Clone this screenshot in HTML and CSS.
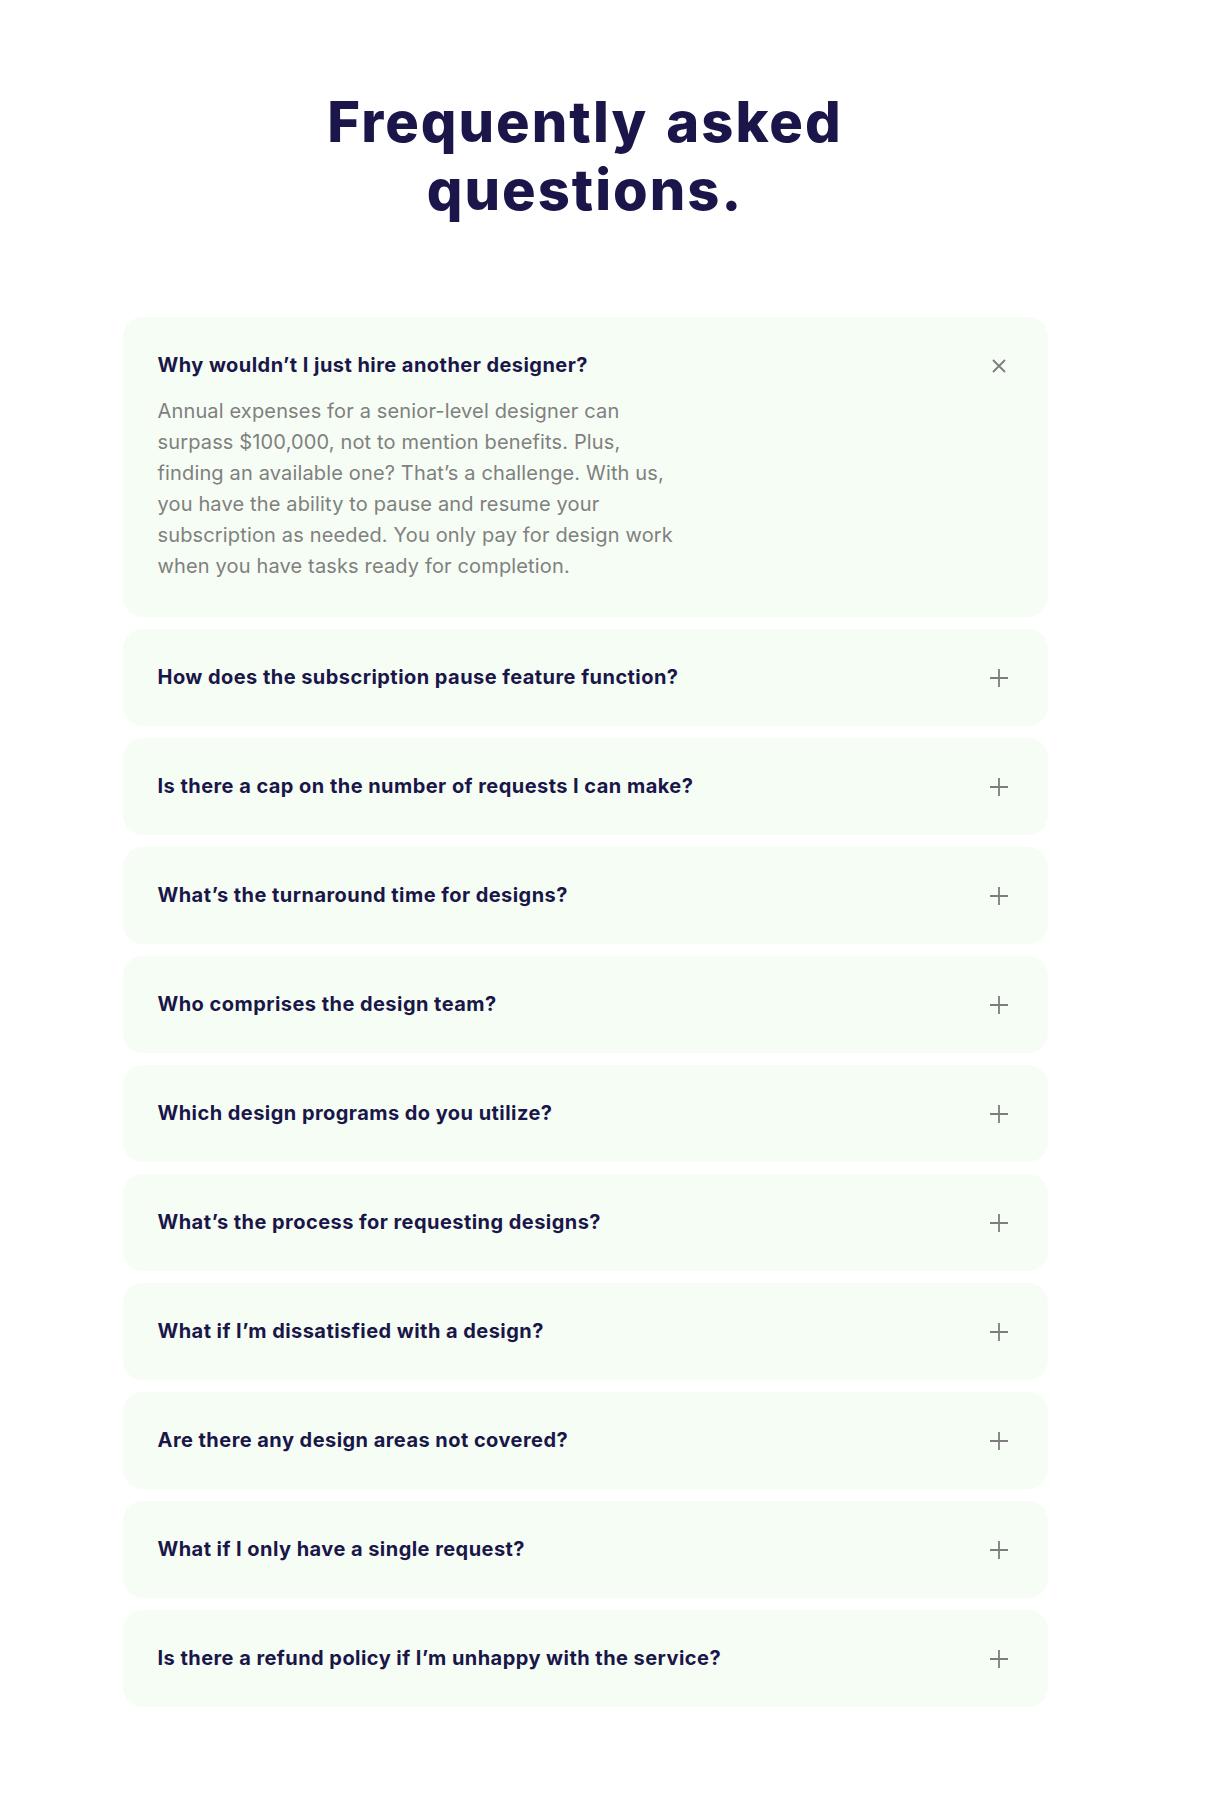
FILE: index.html
```html
<!DOCTYPE html>
<html lang="en">
<head>
<meta charset="utf-8">
<title>Frequently asked questions</title>
<link rel="stylesheet" href="styles.css">
</head>
<body>
<main class="page">
  <h1 class="faq-heading">Frequently asked<br>questions.</h1>
  <div class="faq-list">
    <div class="faq-item open">
      <div class="faq-row">
        <h3 class="faq-q">Why wouldn’t I just hire another designer?</h3>
        <span class="faq-icon"><svg width="14" height="14" viewBox="0 0 14 14"><path d="M1 1L13 13M13 1L1 13" stroke="#7d7d7d" stroke-width="1.8" fill="none"/></svg></span>
      </div>
      <p class="faq-a">Annual expenses for a senior-level designer can surpass $100,000, not to mention benefits. Plus, finding an available one? That’s a challenge. With us, you have the ability to pause and resume your subscription as needed. You only pay for design work when you have tasks ready for completion.</p>
    </div>
    <div class="faq-item">
      <div class="faq-row">
        <h3 class="faq-q">How does the subscription pause feature function?</h3>
        <span class="faq-icon"><svg width="18" height="18" viewBox="0 0 18 18"><path d="M9 0V18M0 9H18" stroke="#7d7d7d" stroke-width="1.8" fill="none"/></svg></span>
      </div>
    </div>
    <div class="faq-item">
      <div class="faq-row">
        <h3 class="faq-q">Is there a cap on the number of requests I can make?</h3>
        <span class="faq-icon"><svg width="18" height="18" viewBox="0 0 18 18"><path d="M9 0V18M0 9H18" stroke="#7d7d7d" stroke-width="1.8" fill="none"/></svg></span>
      </div>
    </div>
    <div class="faq-item">
      <div class="faq-row">
        <h3 class="faq-q">What’s the turnaround time for designs?</h3>
        <span class="faq-icon"><svg width="18" height="18" viewBox="0 0 18 18"><path d="M9 0V18M0 9H18" stroke="#7d7d7d" stroke-width="1.8" fill="none"/></svg></span>
      </div>
    </div>
    <div class="faq-item">
      <div class="faq-row">
        <h3 class="faq-q">Who comprises the design team?</h3>
        <span class="faq-icon"><svg width="18" height="18" viewBox="0 0 18 18"><path d="M9 0V18M0 9H18" stroke="#7d7d7d" stroke-width="1.8" fill="none"/></svg></span>
      </div>
    </div>
    <div class="faq-item">
      <div class="faq-row">
        <h3 class="faq-q">Which design programs do you utilize?</h3>
        <span class="faq-icon"><svg width="18" height="18" viewBox="0 0 18 18"><path d="M9 0V18M0 9H18" stroke="#7d7d7d" stroke-width="1.8" fill="none"/></svg></span>
      </div>
    </div>
    <div class="faq-item">
      <div class="faq-row">
        <h3 class="faq-q">What’s the process for requesting designs?</h3>
        <span class="faq-icon"><svg width="18" height="18" viewBox="0 0 18 18"><path d="M9 0V18M0 9H18" stroke="#7d7d7d" stroke-width="1.8" fill="none"/></svg></span>
      </div>
    </div>
    <div class="faq-item">
      <div class="faq-row">
        <h3 class="faq-q">What if I’m dissatisfied with a design?</h3>
        <span class="faq-icon"><svg width="18" height="18" viewBox="0 0 18 18"><path d="M9 0V18M0 9H18" stroke="#7d7d7d" stroke-width="1.8" fill="none"/></svg></span>
      </div>
    </div>
    <div class="faq-item">
      <div class="faq-row">
        <h3 class="faq-q">Are there any design areas not covered?</h3>
        <span class="faq-icon"><svg width="18" height="18" viewBox="0 0 18 18"><path d="M9 0V18M0 9H18" stroke="#7d7d7d" stroke-width="1.8" fill="none"/></svg></span>
      </div>
    </div>
    <div class="faq-item">
      <div class="faq-row">
        <h3 class="faq-q">What if I only have a single request?</h3>
        <span class="faq-icon"><svg width="18" height="18" viewBox="0 0 18 18"><path d="M9 0V18M0 9H18" stroke="#7d7d7d" stroke-width="1.8" fill="none"/></svg></span>
      </div>
    </div>
    <div class="faq-item">
      <div class="faq-row">
        <h3 class="faq-q">Is there a refund policy if I’m unhappy with the service?</h3>
        <span class="faq-icon"><svg width="18" height="18" viewBox="0 0 18 18"><path d="M9 0V18M0 9H18" stroke="#7d7d7d" stroke-width="1.8" fill="none"/></svg></span>
      </div>
    </div>
  </div>
</main>
</body>
</html>
```

FILE: styles.css
```css
html, body {
  margin: 0;
  padding: 0;
  background: #ffffff;
}
body {
  font-family: Inter, "Liberation Sans", sans-serif;
}
.page {
  width: 1170px;
  padding-top: 88px;
  padding-bottom: 90px;
}
.faq-heading {
  margin: 0;
  text-align: center;
  font-family: Inter, "Liberation Sans", sans-serif;
  font-weight: 800;
  font-size: 56px;
  line-height: 68px;
  color: #1a1649;
  letter-spacing: 2px;
  word-spacing: 4px;
}
.faq-list {
  width: 925px;
  margin: 93px auto 0;
  display: flex;
  flex-direction: column;
  gap: 12px;
}
.faq-item {
  background: #f6fdf4;
  border-radius: 20px;
  padding: 35px 37px 35px 35px;
}
.faq-row {
  display: flex;
  align-items: center;
  justify-content: space-between;
}
.faq-q {
  margin: 0;
  font-size: 20px;
  line-height: 27px;
  font-weight: 700;
  letter-spacing: 0.45px;
  color: #1a1649;
}
.faq-icon {
  width: 24px;
  height: 24px;
  display: flex;
  align-items: center;
  justify-content: center;
}
.faq-a {
  margin: 17px 0 0;
  max-width: 525px;
  font-size: 20px;
  line-height: 31px;
  letter-spacing: 0.15px;
  color: #808080;
}
```
